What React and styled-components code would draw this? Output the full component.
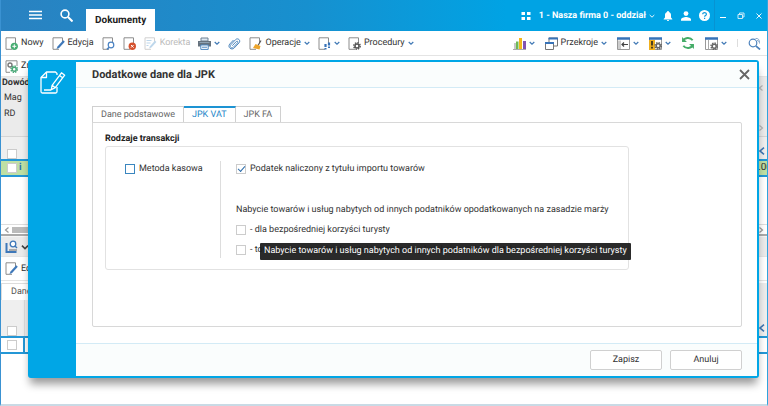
import { useState } from "react";
import styled, { createGlobalStyle, css } from "styled-components";

const GlobalStyle = createGlobalStyle`
  * {
    box-sizing: border-box;
  }
  body {
    margin: 0;
    background: #fff;
    color: #333;
    font-family: Roboto, "Liberation Sans", sans-serif;
    font-size: 9px;
    line-height: 12px;
    text-rendering: geometricPrecision;
  }
  button, input {
    margin: 0;
    font: inherit;
    color: inherit;
    text-rendering: inherit;
  }
`;

const Window = styled.div`
  position: relative;
  display: flex;
  flex-direction: column;
  min-height: 100vh;
  overflow: hidden;
  border-left: 1px solid #3a92d2;
  border-right: 1px solid #2fa4dd;
  border-bottom: 2px solid #c9dae5;
`;

const TopBar = styled.header`
  display: flex;
  align-items: flex-end;
  height: 31px;
  color: #fff;
  background: linear-gradient(to right, #2a82c1, #1790cf 40%, #00a3e4 66%);
`;

const IconButton = styled.button`
  display: flex;
  align-items: center;
  gap: 3px;
  padding: 0;
  border: 0;
  background: transparent;
  white-space: nowrap;
  cursor: pointer;
  &:disabled {
    color: #bbb;
    cursor: default;
  }
`;

const TopGroup = styled.div`
  display: flex;
  align-items: center;
  align-self: stretch;
  gap: ${(p) => p.$gap}px;
`;

const MainNav = styled(TopGroup)`
  padding: 0 13px 0 28px;
`;

const DocTab = styled.a`
  padding: 6px 9px 4px;
  background: #fff;
  color: #222;
  font-size: 10px;
  font-weight: 700;
  text-decoration: none;
`;

const UserArea = styled(TopGroup)`
  margin-left: auto;
  padding-right: 4px;
  button {
    font-weight: 700;
  }
`;

const WindowControls = styled(TopGroup)`
  padding: 0 4px;
  border-left: 1px solid #0793d2;
`;

const Toolbar = styled.div`
  display: flex;
  align-items: center;
  justify-content: space-between;
  height: ${(p) => p.$height || 24}px;
  padding: 0 6px 0 4px;
  border-bottom: 1px solid #e4e4e4;
  background: ${(p) => (p.$shaded ? "#ebebeb" : "#fff")};
`;

const ToolGroup = styled.div`
  display: flex;
  align-items: center;
  gap: ${(p) => p.$gap || 8}px;
`;

const Separator = styled.span`
  width: 1px;
  height: 8px;
  background: #ddd;
`;

const Grid = styled.table`
  width: 100%;
  border-collapse: collapse;
  th {
    padding: 0 1px;
    background: #ebebeb;
    text-align: left;
    vertical-align: top;
    font-size: 9px;
    font-weight: 400;
  }
  th:last-child, td:last-child {
    text-align: right;
  }
  ${(p) =>
    p.$marker &&
    css`
      th:first-child, td:first-child {
        width: 23px;
        border-right: 1px solid #ddd;
      }
      td:first-child {
        border-right: 2px solid #2497d6;
      }
    `}
`;

const HeadRow = styled.tr`
  height: ${(p) => p.$height}px;
  border-bottom: 1px solid #d5d5d5;
`;

const FilterRow = styled.tr`
  height: ${(p) => p.$height}px;
  th {
    background: #efefef;
    vertical-align: bottom;
  }
`;

const SelectedRow = styled.tr`
  height: 16px;
  border-top: 2px solid #2497d6;
  border-bottom: 2px solid #2497d6;
  background: ${(p) => (p.$green ? "#bfe0a4" : "#fff")};
  td {
    padding: 0 1px 0 6px;
    font-size: 10px;
    line-height: 10px;
  }
  td:last-child {
    padding-right: 0;
  }
`;

const CutValue = styled.div`
  width: 9px;
  margin-left: auto;
  overflow: hidden;
  text-align: left;
`;

const ColumnTitle = styled.div`
  line-height: ${(p) => (p.$bold ? 13 : 16)}px;
  padding-left: ${(p) => (p.$bold ? 0 : 2)}px;
  font-weight: ${(p) => (p.$bold ? 700 : 400)};
`;

const ScrollArrows = styled.div`
  display: flex;
  flex-direction: column;
  align-items: flex-end;
  justify-content: space-between;
  padding: 8px 2px 0 0;
  gap: 34px;
`;

const EmptyArea = styled.div`
  height: ${(p) => p.$height}px;
`;

const ScrollBar = styled.div`
  display: flex;
  align-items: center;
  justify-content: space-between;
  height: 10px;
  padding: 0 3px;
  border-top: 1px solid #ddd;
`;

const ScrollThumb = styled.span`
  flex: 1;
  height: 6px;
  margin: 0 4px 0 2px;
  background: #bbb;
`;

const Splitter = styled.div`
  height: 3px;
  border-top: 2px solid #aaa;
  background: #f6f6f6;
`;

const DetailTabs = styled.div`
  display: flex;
  height: 17px;
  background: #ebebeb;
  margin-top: 2px;
`;

const DetailTab = styled.button`
  padding: 0 9px;
  border: 1px solid #ddd;
  border-bottom: 0;
  background: #fff;
  font-size: 9px;
  color: #555;
`;

const Check = styled.input`
  appearance: none;
  flex: none;
  display: inline-grid;
  place-content: center;
  width: 10px;
  height: 10px;
  border: 1px solid ${(p) => (p.$accent ? "#3a86bf" : "#ccc")};
  background: #fff;
  &:checked::before {
    content: "";
    width: 6px;
    height: 3px;
    margin-bottom: 2px;
    border: solid #2b6cab;
    border-width: 0 0 1px 1px;
    transform: rotate(-48deg);
  }
`;

const RowCheck = styled(Check)`
  display: block;
  margin-left: ${(p) => (p.$inset ? 5 : 0)}px;
`;

const RowMark = styled.div`
  display: flex;
  align-items: center;
  gap: 2px;
  color: #2c6fb3;
  font-weight: 700;
`;

const Dialog = styled.section`
  position: absolute;
  inset: 60px 8px 26px 27px;
  display: flex;
  border: 2px solid #00a6e6;
  border-radius: 3px;
  background: #00a6e6;
  box-shadow: 0 8px 8px -2px rgba(0, 0, 0, 0.4);
`;

const DialogSide = styled.div`
  display: flex;
  justify-content: center;
  width: 46px;
  padding-top: 7px;
`;

const DialogMain = styled.div`
  flex: 1;
  display: flex;
  flex-direction: column;
  min-width: 0;
  background: #fff;
`;

const DialogHeader = styled.div`
  display: flex;
  align-items: center;
  justify-content: space-between;
  height: 26px;
  padding: 0 7px 0 16px;
  border-bottom: 1px solid #d3ebf6;
  background: #fafdfd;
`;

const Title = styled.h1`
  margin: 0;
  font-size: 11px;
  line-height: 16px;
  font-weight: 700;
  color: #333;
`;

const DialogBody = styled.div`
  flex: 1;
  display: flex;
  flex-direction: column;
  padding: 18px 15px 16px 16px;
`;

const Tabs = styled.div`
  display: flex;
`;

const Tab = styled.button`
  height: 17px;
  margin-bottom: -1px;
  padding: 0 8px;
  border: 1px solid #d0d0d0;
  border-left-width: ${(p) => (p.$first ? 1 : 0)}px;
  background: #fff;
  font-size: 9px;
  line-height: 12px;
  color: #666;
  cursor: pointer;
  ${(p) =>
    p.$active &&
    css`
      border-top: 2px solid #1d93d3;
      border-bottom-color: #fff;
      color: #1d86c8;
    `}
`;

const TabPanel = styled.div`
  flex: 1;
  padding: 10px 12px;
  border: 1px solid #d8d8d8;
  border-radius: 0 2px 2px 2px;
`;

const SectionTitle = styled.h2`
  margin: 0 0 1px;
  font-size: 9px;
  line-height: 12px;
  font-weight: 700;
  color: #222;
`;

const Card = styled.div`
  display: flex;
  width: 84%;
  height: 124px;
  padding: 14px 19px 11px;
  border: 1px solid #e2e2e2;
  border-radius: 3px;
`;

const Methods = styled.div`
  flex: none;
  width: 96px;
  border-right: 1px solid #ddd;
`;

const Options = styled.div`
  display: flex;
  flex-direction: column;
  flex: 1;
  min-width: 0;
  padding-left: 15px;
`;

const Field = styled.label`
  position: relative;
  display: flex;
  align-items: center;
  gap: 4px;
  height: 16px;
  margin-bottom: ${(p) => p.$space || 0}px;
  font-size: 9px;
  white-space: nowrap;
`;

const OptionNote = styled.p`
  margin: 0 0 5px;
  font-size: 9px;
  line-height: 14px;
  white-space: nowrap;
`;

const Tooltip = styled.span`
  position: absolute;
  left: 24px;
  top: 1px;
  padding: 2px 4px;
  border-radius: 1px;
  background: rgba(26, 26, 26, 0.93);
  color: #fff;
  font-size: 9px;
  line-height: 13px;
`;

const DialogFooter = styled.div`
  display: flex;
  align-items: center;
  justify-content: flex-end;
  gap: 8px;
  height: 33px;
  padding: 0 15px;
  border-top: 1px solid #d3ebf6;
  background: #fafdfd;
`;

const FooterButton = styled.button`
  width: 72px;
  height: 20px;
  padding: 0;
  border: 1px solid #d0d0d0;
  border-radius: 2px;
  background: #fff;
  font-size: 9px;
  cursor: pointer;
`;

const Icon = ({ size = 13, box = 13, children, ...rest }) => (
  <svg width={size} height={size} viewBox={`0 0 ${box} ${box}`} fill="none" aria-hidden="true" {...rest}>
    {children}
  </svg>
);

const Chevron = ({ color = "#3f78b5", dir = "down", size = 6, width = 1.2 }) => {
  const paths = { down: "M.7 2l2.3 2.2L5.3 2", left: "M4.5.5L1.5 3l3 2.5", right: "M1.5.5l3 2.5-3 2.5" };
  return (
    <Icon size={size} box={6}>
      <path d={paths[dir]} stroke={color} strokeWidth={width} />
    </Icon>
  );
};

// blank sheet shared by most of the toolbar icons
const Doc = ({ children, faded }) => (
  <Icon opacity={faded ? 0.4 : 1}>
    <path d="M7 12.3H1V.8h9.5V6" stroke="#8c8c8c" />
    {children}
  </Icon>
);

const NewIcon = () => (
  <Doc>
    <circle cx="9.3" cy="9.3" r="3.6" fill="#47ac71" />
    <path d="M9.3 7.3v4M7.3 9.3h4" stroke="#fff" />
  </Doc>
);

const EditIcon = () => (
  <Doc>
    <path d="M4.5 12l1-2.6 5.700-6.200 1.600 1.500-5.700 6.200z" fill="#3f78b9" />
  </Doc>
);

const PreviewIcon = () => (
  <Doc>
    <circle cx="9" cy="8" r="2.800" fill="#fff" stroke="#4a82c2" strokeWidth="1.2" />
    <path d="M7.2 10.2L5 12.4" stroke="#4a82c2" strokeWidth="1.6" />
  </Doc>
);

const DeleteIcon = () => (
  <Doc>
    <circle cx="9.3" cy="9.3" r="3.700" fill="#d6512e" />
    <path d="M8 8l2.6 2.6M10.6 8L8 10.6" stroke="#fff" />
  </Doc>
);

const CorrectIcon = () => (
  <Doc faded>
    <path d="M2.5 3.5h5M2.5 6h4M2.5 8.5h2" stroke="#5d9dd0" />
    <path d="M5 11.6l1-2.4 5-5.6 1.4 1.3-5 5.6z" fill="#5d9dd0" />
  </Doc>
);

const PrinterIcon = () => (
  <Icon>
    <path d="M3 1h7v3H3z" fill="#dfe9f2" stroke="#6f8193" />
    <path d="M0 4h13v5.5H0z" fill="#66727e" />
    <path d="M1.5 5.5h10" stroke="#8ea2b3" />
    <path d="M2.8 8h7.4v4.4H2.8z" fill="#fff" stroke="#4a86c0" />
    <path d="M4 10.2h5" stroke="#4a86c0" />
  </Icon>
);

const ClipIcon = () => (
  <Icon>
    <path
      d="M4.300 8.700l4-4.200c1-1 2.300.2 1.300 1.300L5.300 10.300c-1.700 1.700-4.200-.6-2.600-2.400l4.800-5.200c2.200-2.300 5.700.6 3.600 3.100L6.200 11c-2.600 2.700-7-.8-4.500-3.900L5.500 3"
      stroke="#4f87bd"
    />
  </Icon>
);

const OperationsIcon = () => (
  <Doc>
    <path d="M12 3.500L9 8.500" stroke="#555" strokeWidth="1.200" />
    <path d="M6.500 7l5 2-1 3.500L4 11z" fill="#eda52c" />
  </Doc>
);

const StepsIcon = () => (
  <Doc>
    <path d="M7.500 7v3M11 5.500v3" stroke="#3873b8" strokeWidth="2.200" />
    <path d="M7.500 11v1.500M11 9.500V11" stroke="#3873b8" strokeWidth="2" />
  </Doc>
);

const Gear = ({ cx = 9, cy = 9, color = "#555" }) => (
  <g stroke={color}>
    <circle cx={cx} cy={cy} r="3.200" strokeWidth="1.400" strokeDasharray="1.500 1" />
    <circle cx={cx} cy={cy} r="2" fill="#fff" strokeWidth="1.500" />
  </g>
);

const ProceduresIcon = () => (
  <Doc>
    <Gear />
  </Doc>
);

const ChangeIcon = () => (
  <Icon>
    <path d="M5 12.300H1V.8h11V6" stroke="#8c8c8c" />
    <circle cx="5" cy="5" r="2" stroke="#777" strokeWidth="1.400" />
    <Gear cx={9.200} cy={9.200} color="#4aa878" />
  </Icon>
);

const ChartIcon = () => (
  <Icon>
    <path d="M1 12.500V6h2.500v6.500z" fill="#c8c8c8" />
    <path d="M3 4.500h2.500v8H3z" fill="#6fba55" />
    <path d="M6 1h3v11.500H6z" fill="#f3b81d" />
    <path d="M10 4h3v8.500h-3z" fill="#8353b3" />
    <path d="M0 12.500h13" stroke="#aaa" />
  </Icon>
);

const WindowsIcon = () => (
  <Icon>
    <path d="M4 1h8.500v8H4z" fill="#fff" stroke="#777" />
    <path d="M3.500 1.500h9.500" stroke="#3873b8" strokeWidth="2" />
    <path d="M.5 5.500h8v7h-8z" fill="#fff" stroke="#777" />
    <path d="M0 6h9" stroke="#3873b8" strokeWidth="2" />
  </Icon>
);

const Panel = ({ children, left }) => (
  <Icon>
    <path d="M.5 1.500h12v11H.5z" fill="#fff" stroke="#999" />
    <path d="M0 1.500h13" stroke="#3873b8" strokeWidth="2.500" />
    {left}
    {children}
  </Icon>
);

const PanelArrowIcon = () => (
  <Panel left={<path d="M1 3.500h3v8.500H1z" fill="#ccc" />}>
    <path d="M4.500 7.500H11M7 5.500L5 7.500l2 2" stroke="#444" strokeWidth="1.200" />
  </Panel>
);

const PanelAlertIcon = () => (
  <Panel left={<path d="M0 3h6v10H0z" fill="#f0b01e" />}>
    <path d="M3 4v4.500M3 9.800v1.700" stroke="#222" strokeWidth="1.600" />
    <Gear cx={9.200} cy={8.800} color="#666" />
  </Panel>
);

const PanelGearIcon = () => (
  <Panel left={<path d="M3.500 3v9.500" stroke="#aaa" />}>
    <Gear cx={9.200} cy={9.200} color="#666" />
  </Panel>
);

const RefreshIcon = () => (
  <Icon size={14}>
    <path d="M1.800 5C3 1.300 8.500.8 10.800 4M11.200 8C10 11.700 4.500 12.200 2.200 9" stroke="#45ac68" strokeWidth="1.800" />
    <path d="M1 1v4.500h4.500zM12 12V7.500H7.500z" fill="#45ac68" />
  </Icon>
);

const FindIcon = () => (
  <Icon>
    <circle cx="5" cy="6" r="3.800" stroke="#4d83bd" strokeWidth="1.200" />
    <path d="M7.800 8.800L12 12.500" stroke="#4d83bd" strokeWidth="1.700" />
    <path d="M7.500 1.500c2.500-.5 4 1 4 4M9 3.500c1.500 0 2.500 1 2.500 3" stroke="#8aa9cc" />
  </Icon>
);

const BrowseIcon = () => (
  <Icon>
    <path d="M1.500 3v9h10" stroke="#3f78b9" strokeWidth="2" />
    <path d="M4 10h8" stroke="#aaa" strokeWidth="2" />
    <circle cx="8" cy="4" r="2.800" fill="#fff" stroke="#3f78b9" strokeWidth="1.300" />
    <path d="M10 6l2 2" stroke="#3f78b9" strokeWidth="1.500" />
  </Icon>
);

const NoteIcon = () => (
  <Icon size={26} box={26} stroke="#fff" strokeWidth="1.300" strokeLinejoin="round">
    <path d="M17 6V4.500L15.500 3H6.500L1 8.500V22.500c0 .8.500 1.500 1.300 1.500h13.400c.8 0 1.300-.7 1.300-1.500V18" />
    <path d="M6.500 3v5.500H1M4 21h7" />
    <path d="M21.500 3.800l3.200 2.400-9.400 12.500-4 2 .8-4.400zM19.500 6.400l3.200 2.400M12.100 16.300l3.200 2.400" />
  </Icon>
);

const tabs = ["Dane podstawowe", "JPK VAT", "JPK FA"];

function AppHeader() {
  return (
    <TopBar>
      <MainNav $gap={18}>
        <IconButton aria-label="Menu">
          <Icon stroke="#fff" strokeWidth="1.500">
            <path d="M0 2.500h13M0 6h13M0 9.500h13" />
          </Icon>
        </IconButton>
        <IconButton aria-label="Szukaj">
          <Icon stroke="#fff">
            <circle cx="5" cy="5" r="3.900" strokeWidth="1.600" />
            <path d="M8 8l4.500 4.500" strokeWidth="2" />
          </Icon>
        </IconButton>
      </MainNav>
      <DocTab href="#dokumenty">Dokumenty</DocTab>
      <UserArea $gap={8}>
        <IconButton aria-label="Aplikacje">
          <Icon size={10} box={10} fill="#fff">
            <path d="M.5 1h3.500v3H.5zM6 1h3.500v3H6zM.5 6h3.500v3H.5zM6 6h3.500v3H6z" />
          </Icon>
        </IconButton>
        <IconButton>
          1 - Nasza firma 0 - oddział
          <Chevron color="#fff" width={0.900} />
        </IconButton>
        <IconButton aria-label="Powiadomienia">
          <Icon size={10} box={10} fill="#fff">
            <path d="M5 0c.7 0 .9.400.9.900 1.500.4 2.100 1.600 2.100 3V6.500L9.300 8v.5H.7V8L2 6.500V3.900c0-1.400.6-2.600 2.100-3C4.100.4 4.300 0 5 0zM4 9h2c0 .6-.4 1-1 1s-1-.4-1-1z" />
          </Icon>
        </IconButton>
        <IconButton aria-label="Konto">
          <Icon size={10} box={10} fill="#fff">
            <circle cx="5" cy="2.600" r="2.400" />
            <path d="M0 9.800V8.500C0 7 3 6 5 6s5 1 5 2.500v1.300z" />
          </Icon>
        </IconButton>
        <IconButton aria-label="Pomoc">
          <Icon size={11} box={11}>
            <circle cx="5.500" cy="5.500" r="5.500" fill="#fff" />
            <path d="M3.700 4.300c0-2.400 3.700-2.300 3.700-.1 0 1.300-1.800 1.400-1.800 2.600M5.600 7.800V9" stroke="#0f9bdc" strokeWidth="1.200" />
          </Icon>
        </IconButton>
      </UserArea>
      <WindowControls $gap={10}>
        <IconButton aria-label="Minimalizuj">
          <Icon size={8} box={8} stroke="#fff">
            <path d="M1 5.500h6" />
          </Icon>
        </IconButton>
        <IconButton aria-label="Przywróć">
          <Icon size={8} box={8} stroke="#cdeaf8">
            <path d="M1 2.500h4.500v4H1zM2.500 2.500V1h4.500v4H5.500" />
          </Icon>
        </IconButton>
        <IconButton aria-label="Zamknij program">
          <Icon size={8} box={8} stroke="#fff" strokeWidth="0.900">
            <path d="M1.500 1.500l5 5M6.500 1.500l-5 5" />
          </Icon>
        </IconButton>
      </WindowControls>
    </TopBar>
  );
}

function ToolItem({ icon, label, title, menu, disabled }) {
  return (
    <IconButton aria-label={title} disabled={disabled}>
      {icon}
      {label}
      {menu && <Chevron />}
    </IconButton>
  );
}

function MainToolbar() {
  return (
    <Toolbar $height={25}>
      <ToolGroup>
        <ToolItem icon={<NewIcon />} label="Nowy" />
        <ToolItem icon={<EditIcon />} label="Edycja" />
        <ToolItem icon={<PreviewIcon />} title="Podgląd" />
        <ToolItem icon={<DeleteIcon />} title="Usuń" />
        <ToolItem icon={<CorrectIcon />} label="Korekta" disabled />
        <ToolItem icon={<PrinterIcon />} title="Drukuj" menu />
        <ToolItem icon={<ClipIcon />} title="Załączniki" />
        <ToolItem icon={<OperationsIcon />} label="Operacje" menu />
        <ToolItem icon={<StepsIcon />} title="Etapy" menu />
        <ToolItem icon={<ProceduresIcon />} label="Procedury" menu />
      </ToolGroup>
      <ToolGroup $gap={10}>
        <ToolItem icon={<ChartIcon />} title="Wykresy" menu />
        <ToolItem icon={<WindowsIcon />} label="Przekroje" menu />
        <ToolItem icon={<PanelArrowIcon />} title="Panel" menu />
        <ToolItem icon={<PanelAlertIcon />} title="Ostrzeżenia" menu />
        <ToolItem icon={<RefreshIcon />} title="Odśwież" />
        <ToolItem icon={<PanelGearIcon />} title="Ustawienia" menu />
        <Separator />
        <ToolItem icon={<FindIcon />} title="Znajdź" />
      </ToolGroup>
    </Toolbar>
  );
}

function DocumentsGrid() {
  return (
    <Grid>
      <thead>
        <HeadRow $height={59}>
          <th>
            <ColumnTitle $bold>Dowód</ColumnTitle>
            <ColumnTitle>Mag</ColumnTitle>
            <ColumnTitle>RD</ColumnTitle>
          </th>
          <th>
            <ScrollArrows>
              <Chevron dir="left" color="#b5b5b5" />
              <Chevron dir="right" color="#b5b5b5" />
            </ScrollArrows>
          </th>
        </HeadRow>
        <FilterRow $height={24}>
          <th>
            <RowCheck type="checkbox" $inset aria-label="Zaznacz wszystkie dokumenty" />
          </th>
          <th>
            <Chevron dir="left" size={8} />
          </th>
        </FilterRow>
      </thead>
      <tbody>
        <SelectedRow $green>
          <td>
            <RowMark>
              <RowCheck type="checkbox" aria-label="Zaznacz dokument" />i
            </RowMark>
          </td>
          <td>
            <CutValue>.00</CutValue>
          </td>
        </SelectedRow>
      </tbody>
    </Grid>
  );
}

function ItemsGrid() {
  return (
    <Grid $marker>
      <thead>
        <FilterRow $height={37}>
          <th>
            <RowCheck type="checkbox" $inset aria-label="Zaznacz wszystkie pozycje" />
          </th>
          <th>
            <Chevron dir="left" size={8} />
          </th>
        </FilterRow>
      </thead>
      <tbody>
        <SelectedRow>
          <td>
            <RowCheck type="checkbox" aria-label="Zaznacz pozycję" />
          </td>
          <td />
        </SelectedRow>
      </tbody>
    </Grid>
  );
}

function JpkDialog() {
  const [tab, setTab] = useState("JPK VAT");
  return (
    <Dialog role="dialog" aria-labelledby="jpk-title">
      <DialogSide>
        <NoteIcon />
      </DialogSide>
      <DialogMain>
        <DialogHeader>
          <Title id="jpk-title">Dodatkowe dane dla JPK</Title>
          <IconButton aria-label="Zamknij">
            <Icon size={11} box={11} stroke="#666" strokeWidth="1.800">
              <path d="M1 1l9 9M10 1l-9 9" />
            </Icon>
          </IconButton>
        </DialogHeader>
        <DialogBody>
          <Tabs role="tablist">
            {tabs.map((name, i) => (
              <Tab
                key={name}
                role="tab"
                aria-selected={tab === name}
                $first={i === 0}
                $active={tab === name}
                onClick={() => setTab(name)}
              >
                {name}
              </Tab>
            ))}
          </Tabs>
          <TabPanel role="tabpanel">
            <SectionTitle>Rodzaje transakcji</SectionTitle>
            <Card>
              <Methods>
                <Field>
                  <Check type="checkbox" $accent />
                  Metoda kasowa
                </Field>
              </Methods>
              <Options>
                <Field $space={26}>
                  <Check type="checkbox" defaultChecked />
                  Podatek naliczony z tytułu importu towarów
                </Field>
                <OptionNote>
                  Nabycie towarów i usług nabytych od innych podatników opodatkowanych na zasadzie marży
                </OptionNote>
                <Field $space={5}>
                  <Check type="checkbox" />
                  - dla bezpośredniej korzyści turysty
                </Field>
                <Field>
                  <Check type="checkbox" />
                  - towary używane, dzieła sztuki, przedmioty kolekcjonerskie i antyki
                  <Tooltip role="tooltip">
                    Nabycie towarów i usług nabytych od innych podatników dla bezpośredniej korzyści turysty
                  </Tooltip>
                </Field>
              </Options>
            </Card>
          </TabPanel>
        </DialogBody>
        <DialogFooter>
          <FooterButton>Zapisz</FooterButton>
          <FooterButton>Anuluj</FooterButton>
        </DialogFooter>
      </DialogMain>
    </Dialog>
  );
}

export default function App() {
  return (
    <Window>
      <GlobalStyle />
      <AppHeader />
      <MainToolbar />
      <Toolbar $height={21}>
        <ToolItem icon={<ChangeIcon />} label="Zmień" />
      </Toolbar>
      <DocumentsGrid />
      <EmptyArea $height={47} />
      <ScrollBar>
        <Chevron dir="left" color="#999" />
        <ScrollThumb />
        <Chevron dir="right" color="#999" />
      </ScrollBar>
      <Splitter />
      <Toolbar $height={20} $shaded>
        <IconButton aria-label="Widok">
          <BrowseIcon />
          <Chevron color="#444" size={8} />
        </IconButton>
      </Toolbar>
      <Toolbar $height={24}>
        <ToolItem icon={<EditIcon />} label="Edycja" />
      </Toolbar>
      <DetailTabs>
        <DetailTab>Dane</DetailTab>
      </DetailTabs>
      <ItemsGrid />
      <JpkDialog />
    </Window>
  );
}
